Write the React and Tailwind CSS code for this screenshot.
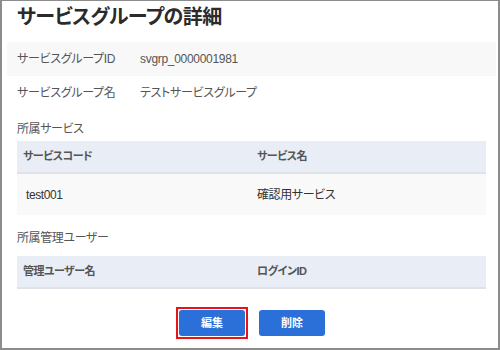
import React from "react";

const font = "font-['Liberation_Sans','Noto_Sans_CJK_JP',sans-serif] [font-feature-settings:'palt']";

const InfoRow = ({ label, value, shaded }) => (
  <div className={`flex h-[34px] items-center pl-[10px] text-[12px] tracking-[-0.3px] text-[#555] ${shaded ? "bg-[#f8f8f8]" : ""}`}>
    <div className="w-[123px]">{label}</div>
    <div>{value}</div>
  </div>
);

const Table = ({ columns, rows }) => (
  <div className="mx-[10px]">
    <div className="flex h-[33px] items-center border-b-2 border-[#dfe2e7] bg-[#e8edf6] text-[11px] font-bold tracking-[-0.5px] text-[#555]">
      <div className="w-[240px] pl-[6px]">{columns[0]}</div>
      <div>{columns[1]}</div>
    </div>
    {rows.map((row) => (
      <div key={row[0]} className="flex h-[41px] items-center bg-[#f9f9f9] text-[12px] tracking-[-0.4px] text-[#333]">
        <div className="w-[240px] pl-[9px]">{row[0]}</div>
        <div>{row[1]}</div>
      </div>
    ))}
  </div>
);

export default function App() {
  return (
    <div className={`h-[350px] w-[500px] border-x-2 border-t border-b-2 border-[#8c8c8c] bg-white pl-[5px] pr-[2px] ${font}`}>
      <h1 className="h-[41px] pl-[10px] text-[20px] font-bold leading-[32px] tracking-[-0.5px] text-[#2b2b2b]">
        サービスグループの詳細
      </h1>

      <InfoRow label="サービスグループID" value="svgrp_0000001981" shaded />
      <InfoRow label="サービスグループ名" value="テストサービスグループ" />

      <div className="h-[31px] pl-[10px] pt-[10px] text-[12px] leading-[18px] tracking-[-0.4px] text-[#555]">所属サービス</div>
      <Table columns={["サービスコード", "サービス名"]} rows={[["test001", "確認用サービス"]]} />

      <div className="h-[41px] pl-[10px] pt-[14px] text-[12px] leading-[18px] tracking-[-0.4px] text-[#555]">所属管理ユーザー</div>
      <Table columns={["管理ユーザー名", "ログインID"]} rows={[]} />

      <div className="mr-[2px] flex items-center justify-center gap-[11px] pt-[18px]">
        <span className="border-2 border-[#e8141b] p-[1px]">
          <button className="block h-[26px] w-[66px] rounded-[3px] bg-[#2b6fd8] text-[11px] font-bold text-white">
            編集
          </button>
        </span>
        <button className="h-[26px] w-[66px] rounded-[3px] bg-[#2b6fd8] text-[11px] font-bold text-white">
          削除
        </button>
      </div>
    </div>
  );
}
